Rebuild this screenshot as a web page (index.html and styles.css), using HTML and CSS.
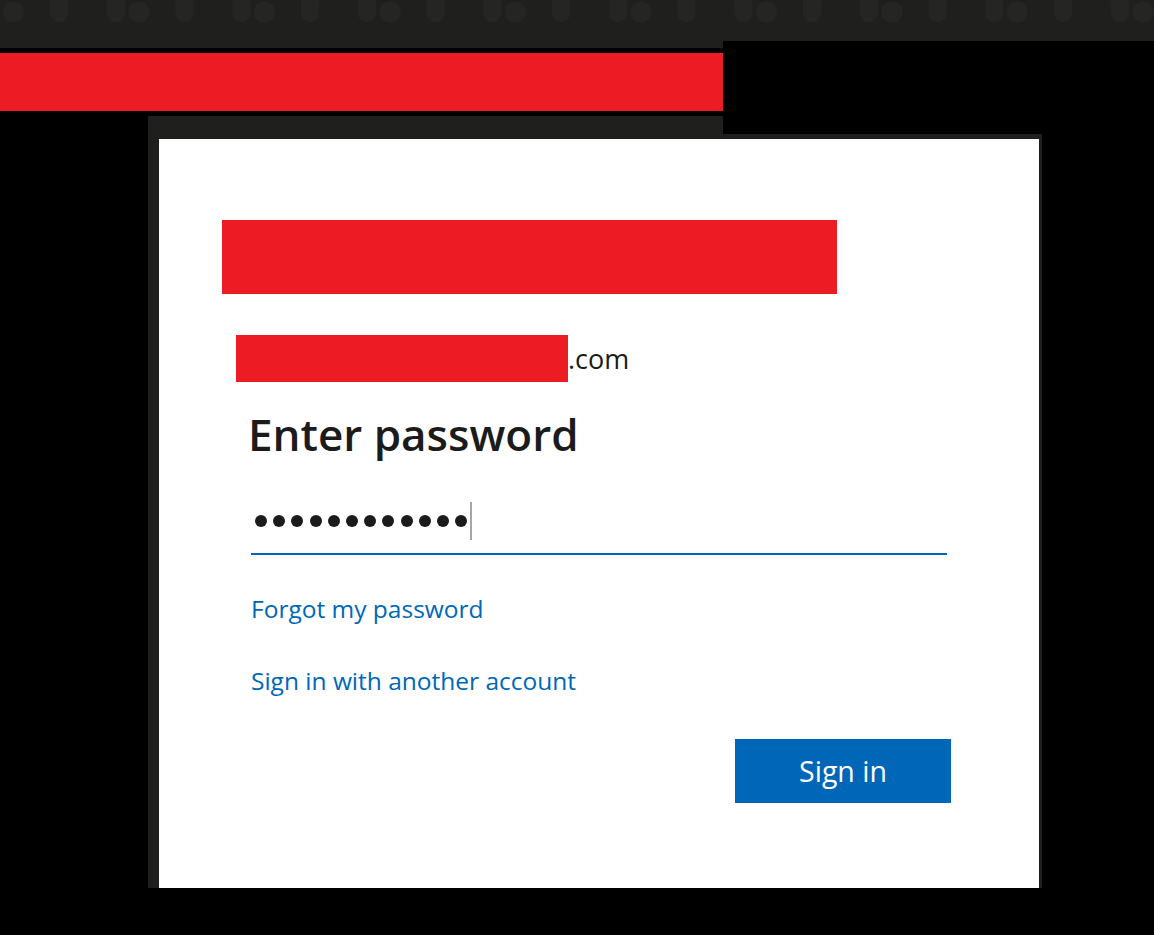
FILE: index.html
```html
<!DOCTYPE html>
<html>
	<head>
		<meta charset="UTF-8">
		<title>Enter password</title>
		<link rel="stylesheet" href="styles.css">
	</head>
	<body>
		<div class="topband">
			<svg width="1154" height="41">
				<defs>
					<pattern id="dots" x="50" y="0" width="125.5" height="41" patternUnits="userSpaceOnUse">
						<path d="M0 -10 H18 V13 A9 9 0 0 1 0 13 Z" fill="#252524"/>
						<path d="M57 -10 H75 V13 A9 9 0 0 1 57 13 Z" fill="#252524"/>
						<circle cx="89" cy="12" r="10.5" fill="#252524"/>
					</pattern>
				</defs>
				<rect width="1154" height="41" fill="url(#dots)"/>
			</svg>
		</div>
		<div class="leftstrip"></div>
		<div class="redbar"></div>

		<div class="frame">
			<div class="frame-cap">
				<svg width="575" height="18">
					<defs>
						<pattern id="dots2" x="28" y="16" width="125.5" height="41" patternUnits="userSpaceOnUse">
							<circle cx="10" cy="12" r="10.5" fill="#242423"/>
							<circle cx="32" cy="12" r="10.5" fill="#242423"/>
							<circle cx="66" cy="12" r="10.5" fill="#242423"/>
						</pattern>
					</defs>
					<rect width="575" height="18" fill="url(#dots2)"/>
				</svg>
			</div>
			<div class="frame-body">
				<div class="dialog">
					<div class="logo"></div>
					<div class="identity">
						<span class="hidden-name"></span><span class="domain">.com</span>
					</div>
					<h1 class="title">Enter password</h1>
					<div class="pwfield">
						<span class="dot"></span><span class="dot"></span><span class="dot"></span><span class="dot"></span><span class="dot"></span><span class="dot"></span><span class="dot"></span><span class="dot"></span><span class="dot"></span><span class="dot"></span><span class="dot"></span><span class="dot"></span><span class="caret"></span>
					</div>
					<a class="link link-first" href="#">Forgot my password</a>
					<a class="link" href="#">Sign in with another account</a>
					<div class="actions">
						<button class="signin">Sign in</button>
					</div>
				</div>
			</div>
		</div>
	</body>
</html>
```

FILE: styles.css
```css
*{
	margin: 0;
	padding: 0;
	box-sizing: border-box;
}
html, body{
	background: #000;
}
body{
	font-family: "Open Sans", "Noto Sans", sans-serif;
	width: 1154px;
	height: 935px;
	overflow: hidden;
}
.topband{
	height: 41px;
	background: #1f1f1e;
}
.topband svg,
.frame-cap svg{
	display: block;
}
.leftstrip{
	width: 723px;
	height: 7px;
	background: #1f1f1e;
}
.redbar{
	width: 723px;
	height: 58px;
	margin-top: 5px;
	background: #ed1c24;
}
.frame{
	width: 894px;
	margin: 5px 0 0 148px;
}
.frame-cap{
	width: 575px;
	height: 18px;
	background: #1f1f1e;
}
.frame-body{
	background: #1f1f1e;
	padding: 5px 3px 0 11px;
}
.dialog{
	width: 880px;
	height: 749px;
	background: #fff;
	padding: 81px 0 0 63px;
	display: flex;
	flex-direction: column;
	align-items: flex-start;
}
.logo{
	width: 615px;
	height: 74px;
	background: #ed1c24;
}
.identity{
	margin: 41px 0 0 14px;
	display: flex;
	align-items: flex-end;
	height: 47px;
}
.hidden-name{
	width: 332px;
	height: 47px;
	background: #ed1c24;
}
.domain{
	font-size: 27px;
	line-height: 27px;
	color: #1b1b1b;
	margin-bottom: 10px;
}
.title{
	margin: 22px 0 0 26px;
	font-size: 44px;
	line-height: 60px;
	font-weight: 600;
	color: #1b1b1b;
}
.pwfield{
	margin: 34px 0 0 29px;
	width: 696px;
	height: 57px;
	border-bottom: 2px solid #0067b8;
	display: flex;
	align-items: center;
	gap: 6.2px;
	padding: 0 0 10px 4px;
}
.dot{
	width: 12px;
	height: 12px;
	border-radius: 50%;
	background: #1b1b1b;
}
.caret{
	width: 2px;
	height: 38px;
	background: #a6a6a6;
	margin-left: -3px;
}
.link{
	margin: 36px 0 0 29px;
	font-size: 24.5px;
	line-height: 36px;
	color: #0067b8;
	text-decoration: none;
}
.link-first{
	margin-top: 36px;
}
.actions{
	align-self: stretch;
	display: flex;
	justify-content: flex-end;
	padding-right: 88px;
	margin-top: 40px;
}
.signin{
	width: 216px;
	height: 64px;
	border: none;
	background: #0067b8;
	color: #fff;
	font-family: "Open Sans", "Noto Sans", sans-serif;
	font-size: 28.5px;
}
```
